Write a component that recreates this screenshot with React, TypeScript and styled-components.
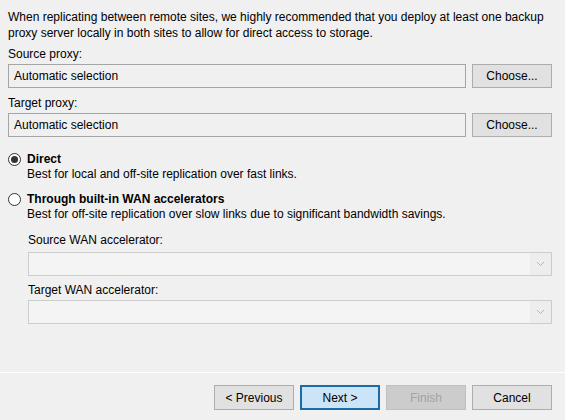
import React from "react";
import styled, { createGlobalStyle } from "styled-components";

const Global = createGlobalStyle`
  html, body { margin: 0; padding: 0; background: #f0f0f0; }
  body { font-family: "Liberation Sans", Arial, sans-serif; font-size: 12px; color: #000; }
  * { box-sizing: border-box; }
`;

const Page = styled.div`
  width: 565px;
  height: 420px;
  display: flex;
  flex-direction: column;
  background: #f0f0f0;
`;

const Content = styled.div`
  flex: 1;
  padding: 9px 13px 0 8px;
  display: flex;
  flex-direction: column;
`;

const Intro = styled.p`
  margin: 0;
  line-height: 16px;
`;

const Label = styled.div<{ $top: number; $gap: number }>`
  line-height: 16px;
  margin-top: ${(p) => p.$top}px;
  margin-bottom: ${(p) => p.$gap}px;
`;

const FieldRow = styled.div`
  display: flex;
  gap: 6px;
  height: 24px;
`;

const TextBox = styled.div`
  flex: 1;
  border: 1px solid #a5a5a5;
  background: #f0f0f0;
  display: flex;
  align-items: center;
  padding-left: 5px;
`;

const Button = styled.button<{ $variant?: "default" | "primary" | "disabled" }>`
  width: 80px;
  height: 25px;
  font-family: inherit;
  font-size: 12px;
  padding: 0;
  color: ${(p) => (p.$variant === "disabled" ? "#a3a3a3" : "#000")};
  background: ${(p) =>
    p.$variant === "primary" ? "#cce4f7" : p.$variant === "disabled" ? "#cccccc" : "#e1e1e1"};
  border: ${(p) =>
    p.$variant === "primary"
      ? "2px solid #1a6ba6"
      : p.$variant === "disabled"
      ? "1px solid #bfbfbf"
      : "1px solid #adadad"};
`;

const SideButton = styled(Button)`
  height: 24px;
`;

const Options = styled.div`
  margin-top: 15px;
  display: flex;
  flex-direction: column;
  gap: 10px;
  line-height: 15px;
`;

const Option = styled.div`
  display: grid;
  grid-template-columns: 19px 1fr;
  row-gap: 0;
`;

const RadioCircle = styled.span<{ $checked?: boolean }>`
  width: 13px;
  height: 13px;
  border-radius: 50%;
  border: 1px solid #333;
  background: #fff;
  display: flex;
  align-items: center;
  justify-content: center;
  align-self: center;
  &::after {
    content: "";
    width: 7px;
    height: 7px;
    border-radius: 50%;
    background: ${(p) => (p.$checked ? "#333" : "transparent")};
  }
`;

const OptionTitle = styled.span`
  font-weight: bold;
`;

const OptionDesc = styled.span`
  grid-column: 2;
`;

const WanBlock = styled.div`
  padding-left: 20px;
  display: flex;
  flex-direction: column;
`;

const Combo = styled.div`
  height: 24px;
  border: 1px solid #cccccc;
  background: #f4f4f4;
  display: flex;
  justify-content: flex-end;
`;

const ComboArrow = styled.div`
  width: 21px;
  background: #ededed;
  display: flex;
  align-items: center;
  justify-content: center;
`;

const Footer = styled.div`
  height: 48px;
  border-top: 1px solid #ffffff;
  padding: 12px 13px 0 0;
  display: flex;
  justify-content: flex-end;
  gap: 6px;
`;

const Chevron = () => (
  <svg width="9" height="6" viewBox="0 0 9 6">
    <path d="M1 1 L4.5 4.5 L8 1" fill="none" stroke="#b5b5b5" strokeWidth="1" />
  </svg>
);

export default function App() {
  return (
    <Page>
      <Global />
      <Content>
        <Intro>
          When replicating between remote sites, we highly recommended that you deploy at least one backup
          <br />
          proxy server locally in both sites to allow for direct access to storage.
        </Intro>
        <Label $top={5} $gap={2}>Source proxy:</Label>
        <FieldRow>
          <TextBox>Automatic selection</TextBox>
          <SideButton>Choose...</SideButton>
        </FieldRow>
        <Label $top={7} $gap={2}>Target proxy:</Label>
        <FieldRow>
          <TextBox>Automatic selection</TextBox>
          <SideButton>Choose...</SideButton>
        </FieldRow>
        <Options>
          <Option>
            <RadioCircle $checked />
            <OptionTitle>Direct</OptionTitle>
            <OptionDesc>Best for local and off-site replication over fast links.</OptionDesc>
          </Option>
          <Option>
            <RadioCircle />
            <OptionTitle>Through built-in WAN accelerators</OptionTitle>
            <OptionDesc>
              Best for off-site replication over slow links due to significant bandwidth savings.
            </OptionDesc>
          </Option>
        </Options>
        <WanBlock>
          <Label $top={10} $gap={4}>Source WAN accelerator:</Label>
          <Combo>
            <ComboArrow>
              <Chevron />
            </ComboArrow>
          </Combo>
          <Label $top={6} $gap={2}>Target WAN accelerator:</Label>
          <Combo>
            <ComboArrow>
              <Chevron />
            </ComboArrow>
          </Combo>
        </WanBlock>
      </Content>
      <Footer>
        <Button>&lt; Previous</Button>
        <Button $variant="primary">Next &gt;</Button>
        <Button $variant="disabled">Finish</Button>
        <Button>Cancel</Button>
      </Footer>
    </Page>
  );
}
